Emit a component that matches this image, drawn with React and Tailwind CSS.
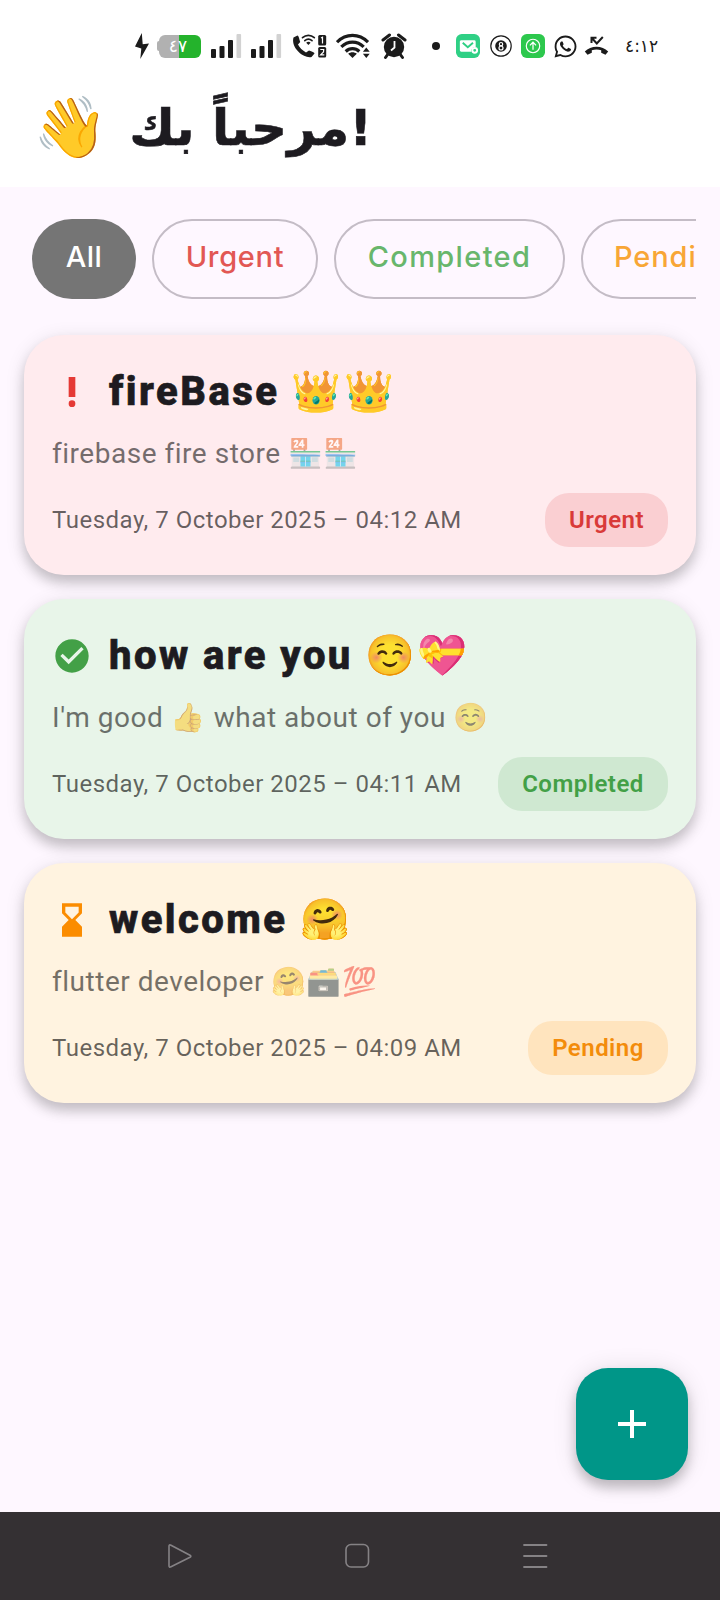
import React from 'react';
import { MdPriorityHigh, MdCheckCircle, MdHourglassBottom, MdAdd } from 'react-icons/md';
import { FaWhatsapp } from 'react-icons/fa';

function Signal({ className }) {
  return (
    <svg viewBox="0 0 31 26" className={'h-[26px] w-[31px] shrink-0 ' + className}>
      <g fill="#1b1b1b">
        <rect x="0" y="16" width="5" height="9" rx="1" />
        <rect x="8.5" y="13" width="5" height="12" rx="1" />
        <rect x="17" y="7" width="5" height="18" rx="1" />
      </g>
      <rect x="25.500" y="1" width="4.600" height="24" rx="1" fill="#d2d2d2" />
    </svg>
  );
}

function StatusBar() {
  return (
    <div className="flex h-[92px] items-center pl-[134px]">
      <svg viewBox="0 0 15 28" className="h-[28px] w-[15px] shrink-0">
        <path d="M7.800 1 1 14.600 7.300 16.600 6.300 27 15 11.500 8.700 12.300Z" fill="#1b1b1b" />
      </svg>
      <div className="ml-[8px] flex shrink-0 items-center">
        <div className="h-[10px] w-[2px] rounded-l bg-[#b1b1b1]" />
        <div className="flex h-[23px] w-[42px] items-center justify-center rounded-[6px] bg-[linear-gradient(90deg,#b1b1b1_0_20px,#24b32c_20px)] pr-[4px] font-['DejaVu_Sans',sans-serif] text-[17px] leading-none text-white">
          ٤٧
        </div>
      </div>
      <Signal className="ml-[10px]" />
      <Signal className="ml-[9px]" />
      <svg viewBox="0 0 35 26" className="ml-[10px] h-[26px] w-[35px] shrink-0">
        <path d="M1.500 4.500 5.500 2.500c1 0 1.800 3.300 2.700 6.500L6 11.500c1.500 3 4.500 6 8 8l3-2c3 1 5.500 2 5.500 3l-3 3.500C12 26 -1.500 15 1.500 4.500Z" fill="#1b1b1b" />
        <g fill="none" stroke="#1b1b1b" strokeWidth="1.700" strokeLinecap="round">
          <path d="M10.500 4.700c3.500-3.200 8.300-3.200 11.800 0" />
          <path d="M12.800 7.700c2.200-2 5-2 7.200 0" />
        </g>
        <path d="M16.400 12l-2.200-2.300c1.300-1.200 3.100-1.200 4.400 0z" fill="#1b1b1b" />
        <rect x="26.200" y="2" width="8" height="10.500" rx="1.500" fill="#1b1b1b" />
        <rect x="26.200" y="14" width="8" height="10.500" rx="1.500" fill="#1b1b1b" />
        <path d="M29 5l1.500-.8V10.500M28.300 16.500h3.400l-.2 2.400-2.900 3h3.700" fill="none" stroke="#fff" strokeWidth="1.200" />
      </svg>
      <svg viewBox="0 0 34 26" className="ml-[9px] h-[26px] w-[34px] shrink-0">
        <g fill="none" stroke="#1b1b1b" strokeWidth="3.200">
          <path d="M1 9.200c9-9 22-9 31 0" />
          <path d="M5.300 13.900c6.500-6.300 15.900-6.300 22.400 0" />
          <path d="M9.700 18.500c4-3.800 9.600-3.800 13.600 0" />
        </g>
        <path d="M16.500 25l-4.300-4.200c2.400-2 6.200-2 8.600 0z" fill="#1b1b1b" />
        <path d="M30.300 14.500l3.400 4.200h-6.800zM30.300 25l3.400-4.200h-6.800z" fill="#1b1b1b" />
      </svg>
      <svg viewBox="0 0 26 28" className="ml-[11px] h-[28px] w-[26px] shrink-0">
        <circle cx="13" cy="15" r="10.200" fill="#1b1b1b" />
        <path d="M2 8 8.500 3M24 8 17.500 3M7 22l-2.500 3.500M19 22l2.500 3.500" stroke="#1b1b1b" strokeWidth="3" strokeLinecap="round" />
        <path d="M13.500 9v6.500l-3.500 3" fill="none" stroke="#fff" strokeWidth="1.800" />
      </svg>
      <div className="ml-[25px] size-[8px] shrink-0 rounded-full bg-[#1b1b1b]" />
      <svg viewBox="0 0 25 25" className="ml-[16px] size-[24px] shrink-0">
        <rect width="25" height="25" rx="6" fill="#2fd085" />
        <path d="M6 6.500h13a1.500 1.500 0 0 1 1.500 1.500v5.500a4 4 0 0 0-4.500 5H5.500A1.500 1.500 0 0 1 4 17V8a1.500 1.500 0 0 1 2-1.500Z" fill="#fff" />
        <path d="M7 9.200l5.300 4.500 5.400-4.500" fill="none" stroke="#2fd085" strokeWidth="2" />
        <circle cx="19.500" cy="17" r="2.500" fill="none" stroke="#fff" strokeWidth="2" />
      </svg>
      <svg viewBox="0 0 22 22" className="ml-[10px] size-[22px] shrink-0">
        <circle cx="11" cy="11" r="10.200" fill="#fff" stroke="#1b1b1b" strokeWidth="1.200" />
        <circle cx="11" cy="11" r="5.800" fill="#1b1b1b" />
        <circle cx="11" cy="9.200" r="1.700" fill="none" stroke="#fff" strokeWidth="1.200" />
        <circle cx="11" cy="13" r="2" fill="none" stroke="#fff" strokeWidth="1.200" />
      </svg>
      <svg viewBox="0 0 25 25" className="ml-[9px] size-[24px] shrink-0">
        <rect width="25" height="25" rx="6" fill="#2dc84d" />
        <circle cx="12.500" cy="12.500" r="7" fill="none" stroke="#fff" strokeWidth="1.200" />
        <path d="M12.500 16.500V9M9.300 11.800l3.200-3.200 3.200 3.200" fill="none" stroke="#fff" strokeWidth="1.300" />
      </svg>
      <FaWhatsapp className="ml-[8px] size-[25px] shrink-0 text-[#1b1b1b]" />
      <svg viewBox="0 0 25 24" className="ml-[6px] h-[24px] w-[25px] shrink-0">
        <path d="M.8 17.500c6-6.300 17.400-6.300 23.400 0l-2.700 3.300-4.300-2v-2.500c-3-1.200-6.400-1.200-9.400 0v2.500l-4.300 2z" fill="#1b1b1b" />
        <path d="M7.500 9V3.700h5M7.800 4l5 5.500 6-6.500" fill="none" stroke="#1b1b1b" strokeWidth="2" />
      </svg>
      <span className="ml-[16px] font-['DejaVu_Sans',sans-serif] text-[17px] leading-none tracking-[-0.900px] text-[#1b1b1b]">٤:١٢</span>
    </div>
  );
}

const chips = [
  { label: 'All', cls: 'w-[104px] justify-center bg-[#757575] tracking-[0.500px] text-white' },
  { label: 'Urgent', cls: 'w-[166px] justify-center border-2 border-[#c4bcc6] tracking-[0.700px] text-[#e25754]' },
  { label: 'Completed', cls: 'w-[231px] justify-center border-2 border-[#c4bcc6] tracking-[1.350px] text-[#68b66c]' },
  { label: 'Pending', cls: 'w-[190px] border-2 border-[#c4bcc6] pl-[31px] tracking-[0.900px] text-[#f8a636]' },
];

const cards = [
  {
    bg: 'bg-[#ffebee]', Icon: MdPriorityHigh, color: 'text-[#e53935]', title: 'fireBase', te: '👑👑',
    sub: 'firebase fire store 🏪🏪', date: 'Tuesday, 7 October 2025 – 04:12 AM',
    tag: 'Urgent', tagCls: 'w-[123px] bg-[#facfd2] text-[#d93b39]',
  },
  {
    bg: 'bg-[#e8f5e9]', Icon: MdCheckCircle, color: 'text-[#43a047]', title: 'how are you', te: '☺️💝',
    sub: "I'm good 👍 what about of you ☺️", date: 'Tuesday, 7 October 2025 – 04:11 AM',
    tag: 'Completed', tagCls: 'w-[170px] bg-[#cfe8d1] text-[#43a047]',
  },
  {
    bg: 'bg-[#fff3e0]', Icon: MdHourglassBottom, color: 'text-[#fb8c00]', title: 'welcome', te: '🤗',
    sub: 'flutter developer 🤗🗃️💯', date: 'Tuesday, 7 October 2025 – 04:09 AM',
    tag: 'Pending', tagCls: 'w-[140px] bg-[#ffe4be] text-[#f38c0b]',
  },
];

function Card({ c }) {
  const { Icon } = c;
  return (
    <article className={'flex h-[240px] flex-col rounded-[40px] px-[28px] pt-[32px] shadow-[0_8px_12px_rgba(0,0,0,0.17),0_4px_20px_rgba(0,0,0,0.11)] ' + c.bg}>
      <div className="flex h-[50px] items-center">
        <Icon className={'size-[40px] shrink-0 ' + c.color} />
        <h2 className="ml-[17px] whitespace-pre text-[40px] leading-[50px] font-extrabold tracking-[2.450px] text-[#1d1b20] [-webkit-text-stroke:0.700px_#1d1b20]">
          {c.title} {c.te}
        </h2>
      </div>
      <p className="mt-[17px] h-[40px] whitespace-pre text-[28px] leading-[40px] tracking-[0.520px] text-black opacity-54">{c.sub}</p>
      <div className="mt-[19px] flex h-[54px] items-center justify-between">
        <span className="whitespace-pre text-[24px] tracking-[0.500px] text-black/60">{c.date}</span>
        <span className={'flex h-[54px] items-center justify-center rounded-[24px] text-[24px] font-semibold tracking-[0.480px] ' + c.tagCls}>{c.tag}</span>
      </div>
    </article>
  );
}

export default function App() {
  return (
    <div className="flex h-[1600px] w-[720px] flex-col overflow-hidden bg-[#fef7ff] font-[Roboto,'Noto_Color_Emoji',sans-serif]">
      <header className="h-[187px] shrink-0 bg-white">
        <StatusBar />
        <h1 dir="rtl" className="flex h-[70px] w-[372px] items-center justify-start whitespace-pre font-['DejaVu_Sans','Noto_Color_Emoji',sans-serif] text-[50px] font-bold text-[#1d1b20]">
          <span className="pt-[3px] [-webkit-text-stroke:0.600px_#1d1b20]">!مرحباً بك</span>
          <span className="mr-[21px] text-[60px] leading-[70px]">👋</span>
        </h1>
      </header>
      <nav className="mt-[32px] mr-[24px] ml-[32px] flex h-[80px] shrink-0 gap-[16px] overflow-hidden">
        {chips.map((c) => (
          <button key={c.label} className={"flex h-[80px] shrink-0 items-center rounded-[40px] pb-[4px] font-[Inter,sans-serif] text-[29px] font-medium " + c.cls}>
            {c.label}
          </button>
        ))}
      </nav>
      <main className="flex flex-1 flex-col gap-[24px] px-[24px] pt-[35.500px]">
        {cards.map((c) => <Card key={c.title} c={c} />)}
        <div className="mt-auto mr-[8px] mb-[32px] flex size-[112px] items-center justify-center self-end rounded-[32px] bg-[#009688] text-white shadow-[0_8px_12px_rgba(0,0,0,0.2),0_2px_24px_rgba(0,0,0,0.12)]">
          <MdAdd className="size-[48px]" />
        </div>
      </main>
      <footer className="flex h-[88px] shrink-0 items-center bg-[#343033] pl-[167px]">
        <svg viewBox="0 0 26 26" className="size-[26px]" fill="none" stroke="#858285" strokeWidth="1.600">
          <path d="M2 3.200v19.600q0 2 2 1l19-9.500q1.700-1 0-2L4 2.200q-2-1-2 1Z" />
        </svg>
        <svg viewBox="0 0 26 26" className="ml-[151px] size-[26px]" fill="none" stroke="#858285" strokeWidth="1.600">
          <rect x="2" y="1.500" width="22.500" height="22.500" rx="5" />
        </svg>
        <svg viewBox="0 0 26 26" className="ml-[152px] size-[26px]" fill="none" stroke="#858285" strokeWidth="1.800" strokeLinecap="round">
          <path d="M2 2h22.500M2 13h22.500M2 24h22.500" />
        </svg>
      </footer>
    </div>
  );
}
